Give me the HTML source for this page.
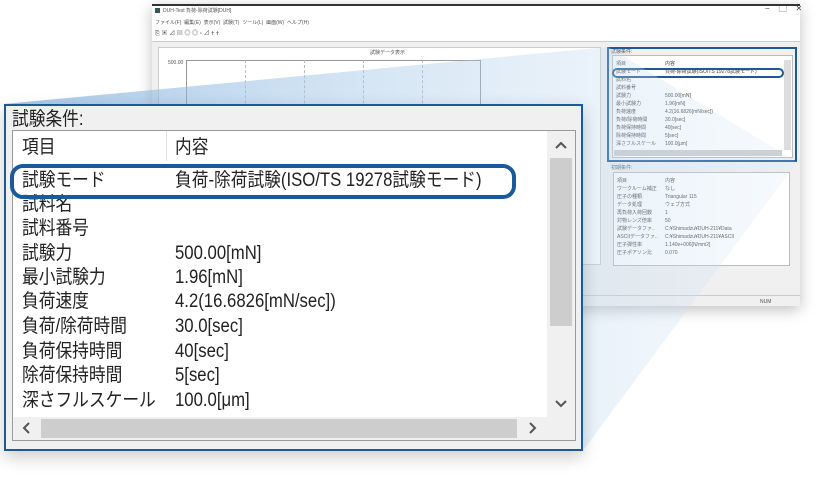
<!DOCTYPE html>
<html><head><meta charset="utf-8"><style>
*{margin:0;padding:0;box-sizing:border-box}
body{width:826px;height:479px;background:#fff;position:relative;overflow:hidden;font-family:"Liberation Sans","Noto Sans CJK JP",sans-serif}
.a{position:absolute}
.t{font-size:5px;color:#555;white-space:nowrap;line-height:6px}
.row{position:absolute;left:0;font-size:19px;color:#222;white-space:nowrap;transform:scaleX(.88);transform-origin:left top;line-height:22px}
</style></head><body>
<div class="a" style="left:152px;top:4px;width:648px;height:302px;background:#f0f0f0;box-shadow:0 4px 14px rgba(0,0,0,.25)"></div>
<div class="a" style="left:152px;top:4px;width:648px;height:2px;background:#333"></div>
<div class="a" style="left:152px;top:6px;width:648px;height:36px;background:#fff"></div>
<div class="a" style="left:155px;top:8px;width:5px;height:5px;background:#355"></div>
<div class="a t" style="left:163px;top:8px">DUH-Test 負荷-除荷試験[DUH]</div>
<div class="a t" style="left:765px;top:6px;font-size:8px;color:#444">−&nbsp;&nbsp;&nbsp;&nbsp;▢&nbsp;&nbsp;&nbsp;&nbsp;✕</div>
<div class="a t" style="left:155px;top:20px">ファイル(F)&nbsp;&nbsp;編集(E)&nbsp;&nbsp;表示(V)&nbsp;&nbsp;試験(T)&nbsp;&nbsp;ツール(L)&nbsp;&nbsp;画面(W)&nbsp;&nbsp;ヘルプ(H)</div>
<div class="a t" style="left:155px;top:31px;font-size:6px">⎘ ▣ ⊿ ▤ ◎ ◎ ▫ ⊿ ✝ ✝</div>
<div class="a" style="left:152px;top:41px;width:648px;height:1px;background:#ccc"></div>
<div class="a" style="left:158px;top:47px;width:443px;height:218px;background:#fff;border:1px solid #ccc"></div>
<div class="a t" style="left:370px;top:50px">試験データ表示</div>
<div class="a t" style="left:168px;top:60px">500.00</div>
<div class="a" style="left:186px;top:60px;width:295px;height:205px;border:1px solid #999;border-bottom:none"></div>
<div class="a" style="left:245px;top:60px;height:205px;border-left:1px dashed #bbb"></div>
<div class="a" style="left:304px;top:60px;height:205px;border-left:1px dashed #bbb"></div>
<div class="a" style="left:363px;top:60px;height:205px;border-left:1px dashed #bbb"></div>
<div class="a" style="left:422px;top:60px;height:205px;border-left:1px dashed #bbb"></div>
<div class="a t" style="left:611px;top:49px">試験条件:</div>
<div class="a" style="left:612px;top:55px;width:181px;height:103px;background:#fff;border:1px solid #bbb"></div>
<div class="a" style="left:784px;top:60px;width:7px;height:90px;background:#ddd"></div>
<div class="a" style="left:614px;top:150px;width:168px;height:6px;background:#ccc"></div>
<div class="a t" style="left:616px;top:60px;line-height:8px;color:#444">項目<br>試験モード<br>試料名<br>試料番号<br>試験力<br>最小試験力<br>負荷速度<br>負荷/除荷時間<br>負荷保持時間<br>除荷保持時間<br>深さフルスケール</div>
<div class="a t" style="left:665px;top:60px;line-height:8px;color:#444">内容<br>負荷-除荷試験(ISO/TS 19278試験モード)<br><br><br>500.00[mN]<br>1.96[mN]<br>4.2(16.6826[mN/sec])<br>30.0[sec]<br>40[sec]<br>5[sec]<br>100.0[μm]</div>
<div class="a" style="left:612px;top:68px;width:172px;height:10px;border:2px solid #1a5a9a;border-radius:5px"></div>
<div class="a" style="left:607px;top:47px;width:190px;height:115px;border:2px solid #1a5a9a"></div>
<div class="a t" style="left:611px;top:165px">初期条件:</div>
<div class="a" style="left:613px;top:172px;width:177px;height:94px;background:#fff;border:1px solid #bbb"></div>
<div class="a t" style="left:617px;top:177px;line-height:8px;color:#444">項目<br>ワークルーム補正<br>圧子の種類<br>データ処理<br>再負荷入荷回数<br>対物レンズ倍率<br>試験データファ..<br>ASCIIデータファ..<br>圧子弾性率<br>圧子ポアソン比</div>
<div class="a t" style="left:665px;top:177px;line-height:8px;color:#444">内容<br>なし<br>Triangular 115<br>ウェブ方式<br>1<br>50<br>C:¥Shimadzu¥DUH-211¥Data<br>C:¥Shimadzu¥DUH-211¥ASCII<br>1.140e+006[N/mm2]<br>0.070</div>
<div class="a" style="left:152px;top:295px;width:648px;height:1px;background:#ccc"></div>
<div class="a t" style="left:760px;top:299px">NUM</div>
<svg class="a" style="left:0;top:0" width="826" height="479">
<defs><linearGradient id="g" x1="0" y1="0" x2="1" y2="0"><stop offset="0" stop-color="#7fb0dc" stop-opacity=".7"/><stop offset="1" stop-color="#d4e6f6" stop-opacity=".2"/></linearGradient></defs>
<polygon points="4,104 608,47 797,162 582,452" fill="url(#g)"/>
</svg>
<div class="a" style="left:4px;top:104px;width:579px;height:347px;background:#f0f0f0;border:2px solid #1a5a9a;box-shadow:0 6px 16px rgba(0,0,0,.2)"></div>
<div class="row" style="left:12px;top:109px">試験条件:</div>
<div class="a" style="left:12px;top:130px;width:564px;height:311px;background:#fff;border:1px solid #999"></div>
<div class="a" style="left:166px;top:131px;width:1px;height:30px;background:#e3e3e3"></div>
<div class="a" style="left:547px;top:131px;width:28px;height:286px;background:#f0f0f0"></div>
<div class="a" style="left:550px;top:158px;width:22px;height:168px;background:#cdcdcd"></div>
<div class="a" style="left:13px;top:417px;width:534px;height:23px;background:#f0f0f0"></div>
<div class="a" style="left:41px;top:419px;width:476px;height:19px;background:#cdcdcd"></div>
<div class="a" style="left:547px;top:417px;width:28px;height:23px;background:#f0f0f0"></div>
<svg class="a" style="left:0;top:0" width="826" height="479" fill="none" stroke="#555" stroke-width="2">
<path d="M556,148 L561,143 L566,148"/>
<path d="M556,401 L561,406 L566,401"/>
<path d="M29,423 L24,428 L29,433"/>
<path d="M530,423 L535,428 L530,433"/>
</svg>
<div class="a" style="left:22px;top:137px;width:520px;height:280px">
<div class="row" style="top:0">項目</div>
<div class="row" style="top:33px">試験モード</div>
<div class="row" style="top:57px">試料名</div>
<div class="row" style="top:81px">試料番号</div>
<div class="row" style="top:106px">試験力</div>
<div class="row" style="top:130px">最小試験力</div>
<div class="row" style="top:154px">負荷速度</div>
<div class="row" style="top:179px">負荷/除荷時間</div>
<div class="row" style="top:204px">負荷保持時間</div>
<div class="row" style="top:228px">除荷保持時間</div>
<div class="row" style="top:253px">深さフルスケール</div>
<div class="row" style="left:153px;top:0">内容</div>
<div class="row" style="left:153px;top:33px">負荷-除荷試験(ISO/TS 19278試験モード)</div>
<div class="row" style="left:153px;top:106px">500.00[mN]</div>
<div class="row" style="left:153px;top:130px">1.96[mN]</div>
<div class="row" style="left:153px;top:154px">4.2(16.6826[mN/sec])</div>
<div class="row" style="left:153px;top:179px">30.0[sec]</div>
<div class="row" style="left:153px;top:204px">40[sec]</div>
<div class="row" style="left:153px;top:228px">5[sec]</div>
<div class="row" style="left:153px;top:253px">100.0[μm]</div>
</div>
<div class="a" style="left:10px;top:164px;width:506px;height:35px;border:4px solid #1a5a9a;border-radius:13px"></div>
</body></html>
